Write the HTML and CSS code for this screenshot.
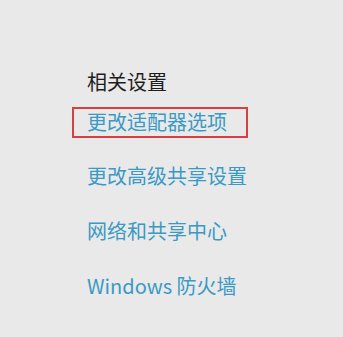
FILE: index.html
```html
<!DOCTYPE html>
<html lang="zh-CN">
<head>
<meta charset="utf-8">
<title>相关设置</title>
<link rel="stylesheet" href="styles.css">
</head>
<body>
<div class="page">
  <h2 class="heading">相关设置</h2>
  <ul class="links">
    <li class="link selected"><a href="#">更改适配器选项</a></li>
    <li class="link"><a href="#">更改高级共享设置</a></li>
    <li class="link"><a href="#">网络和共享中心</a></li>
    <li class="link"><a href="#">Windows 防火墙</a></li>
  </ul>
</div>
</body>
</html>
```
FILE: styles.css
```css
html, body {
  margin: 0;
  padding: 0;
  background: #e9e9e9;
  width: 343px;
  height: 337px;
  overflow: hidden;
}
.page {
  padding: 70px 0 0 72px;
  font-family: "Noto Sans CJK SC", "Noto Sans", sans-serif;
}
.heading {
  margin: 0 0 13px 15px;
  font-size: 20px;
  font-weight: normal;
  line-height: 24px;
  color: #1e1e1e;
}
.links {
  list-style: none;
  margin: 0;
  padding: 0;
  display: flex;
  flex-direction: column;
  align-items: flex-start;
  gap: 31px;
}
.link {
  font-size: 20px;
  line-height: 24px;
  padding-left: 15px;
}
.link a {
  color: #3a9ac4;
  text-decoration: none;
}
.selected {
  border: 2px solid #d64040;
  padding: 1px 19px 2px 13px;
  margin-bottom: -5px;
}
```
